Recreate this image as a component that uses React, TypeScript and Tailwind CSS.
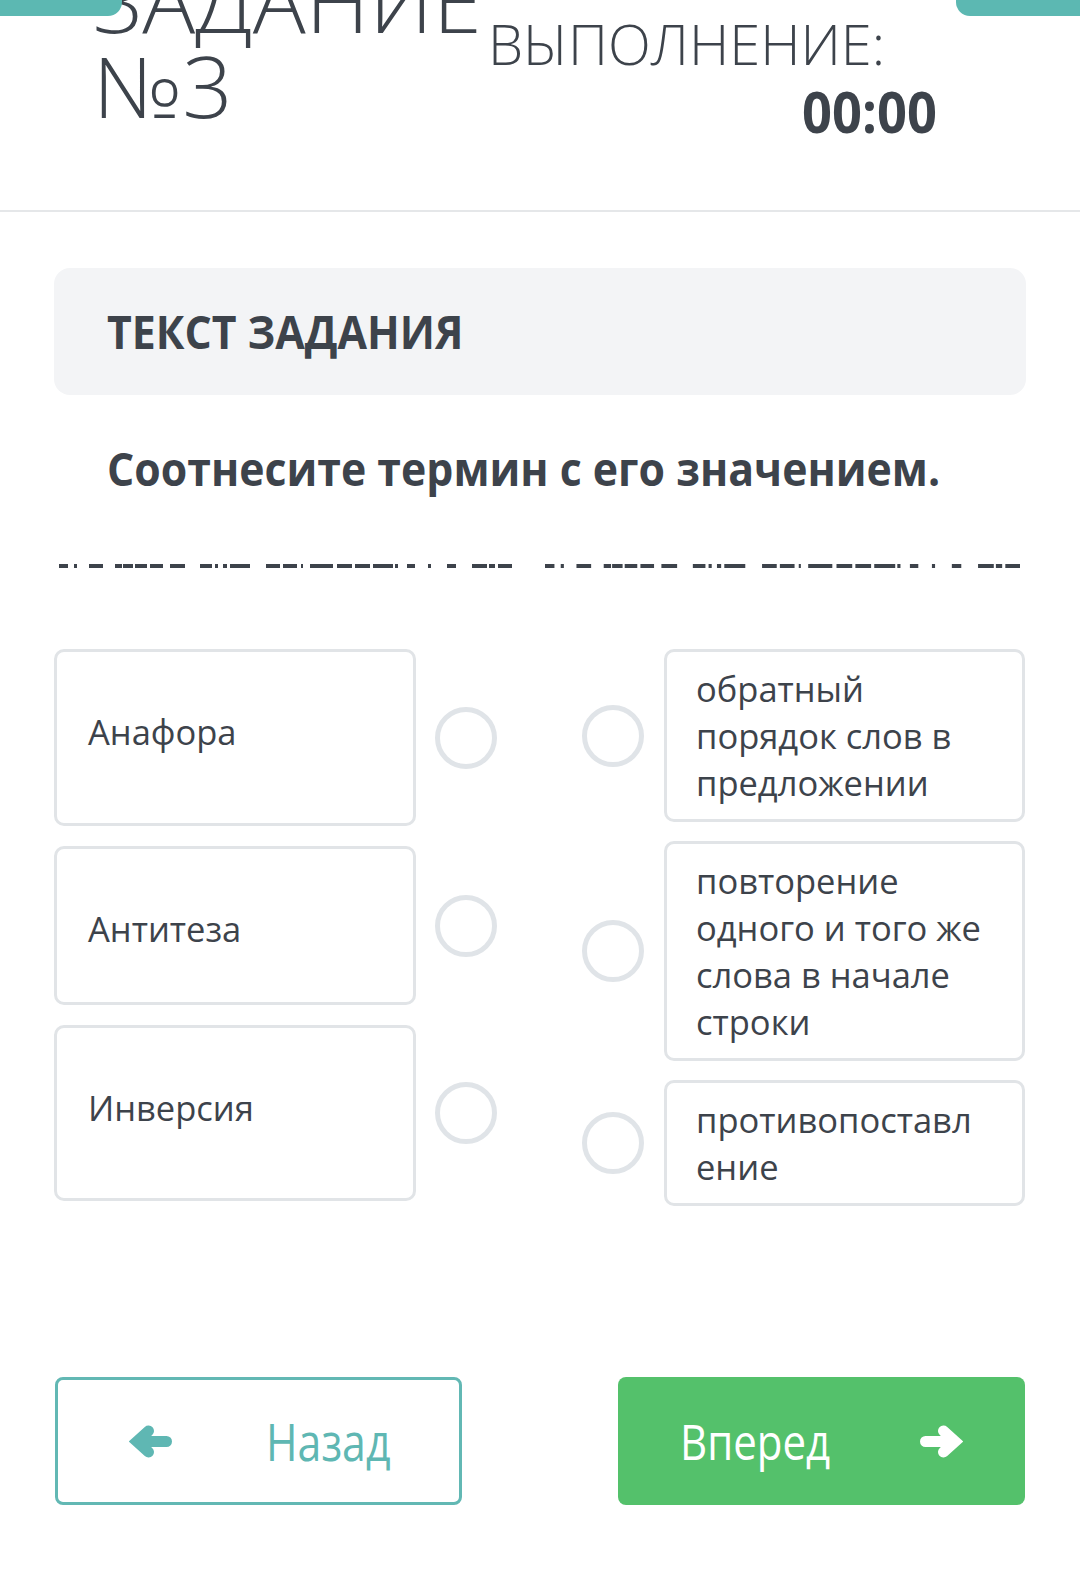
const dashes: [number, number][] = [
    [0, 9], [15, 3], [30, 14], [56, 7], [64, 10], [76, 12], [91, 13], [111, 15],
    [141, 12], [156, 3], [164, 4], [171, 20],
    [207, 14], [224, 14], [242, 2], [251, 23], [278, 15], [296, 15], [314, 20], [336, 3],
    [348, 8], [369, 3], [388, 9], [413, 15], [430, 6], [439, 14],
];

function DashRow({ width }: { width: number }) {
    return (
        <svg width={width} height={4} viewBox="0 0 453 4" preserveAspectRatio="none" className="block">
            {dashes.map(([x, w], i) => (
                <rect key={i} x={x} y={0} width={w} height={4} fill="#3d434b" />
            ))}
        </svg>
    );
}

// thick rounded arrow, points left by default
function Arrow({ right = false }: { right?: boolean }) {
    return (
        <svg width={43} height={33} viewBox="0 0 43 33" className={right ? 'shrink-0 -scale-x-100' : 'shrink-0'}>
            <path
                d="M19.5 6 L8 16.5 L19.5 27 M8 16.5 H37.5"
                fill="none"
                stroke="currentColor"
                strokeWidth={11}
                strokeLinecap="round"
                strokeLinejoin="miter"
            />
        </svg>
    );
}

function Ring() {
    return <div className="w-[62px] h-[62px] shrink-0 rounded-full border-[5px] border-[#e0e4e8]" />;
}

const terms = [
    { text: 'Анафора', h: 'h-[177px]' },
    { text: 'Антитеза', h: 'h-[159px]' },
    { text: 'Инверсия', h: 'h-[176px]' },
];

const meanings = [
    'обратный порядок слов в предложении',
    'повторение одного и того же слова в начале строки',
    'противопоставление',
];

export default function App() {
    return (
        <div className="min-h-[1576px] bg-white text-[#3d434b] font-['Open_Sans',sans-serif]">
            {/* Header */}
            <div className="relative h-[212px] overflow-hidden border-b-2 border-[#e5e7e9]">
                <div className="absolute left-0 top-0 w-[122px] h-[16px] bg-[#5cb8b2] rounded-br-[14px] z-10" />
                <div className="absolute right-0 top-0 w-[124px] h-[16px] bg-[#5cb8b2] rounded-bl-[14px] z-10" />
                <div className="flex">
                    <div className="w-[488px] shrink-0 pl-[93px] -mt-[42px]">
                        <div className="origin-left scale-x-[1.05] whitespace-nowrap text-[84px] leading-[85px] font-light">
                            <div>ЗАДАНИЕ</div>
                            <div>№3</div>
                        </div>
                    </div>
                    <div className="w-[449px] shrink-0 pt-[15px]">
                        <div className="whitespace-nowrap text-[56px] leading-[56px] font-light">
                            ВЫПОЛНЕНИЕ:
                        </div>
                        <div className="mt-[12px] text-right origin-right scale-x-[0.92] text-[57px] leading-[57px] font-bold">
                            00:00
                        </div>
                    </div>
                </div>
            </div>

            {/* Task text */}
            <div className="mx-[54px] mt-[56px] h-[127px] rounded-2xl bg-[#f3f4f6] flex items-center pl-[53px]">
                <span className="origin-left scale-x-[0.91] whitespace-nowrap text-[47px] font-bold">ТЕКСТ ЗАДАНИЯ</span>
            </div>
            <div className="pl-[107px] mt-[48px] h-[50px] flex items-center">
                <span className="origin-left scale-x-[0.93] whitespace-nowrap text-[46px] font-bold">
                    Соотнесите термин с его значением.
                </span>
            </div>

            <div className="flex mt-[71px] pl-[59px]">
                <DashRow width={453} />
                <div className="ml-[33px]">
                    <DashRow width={475} />
                </div>
            </div>

            {/* Matching */}
            <div className="flex mt-[81px] pl-[54px]">
                <div className="flex flex-col gap-[20px]">
                    {terms.map((t) => (
                        <div key={t.text} className="flex items-center">
                            <div className={`w-[362px] ${t.h} rounded-[10px] border-[3px] border-[#e1e4e7] px-[31px] pt-[56px] text-[34.5px] leading-[47px]`}>
                                {t.text}
                            </div>
                            <div className="ml-[19px]">
                                <Ring />
                            </div>
                        </div>
                    ))}
                </div>
                <div className="flex flex-col gap-[19px] ml-[85px]">
                    {meanings.map((m) => (
                        <div key={m} className="flex items-center">
                            <Ring />
                            <div className="ml-[20px] w-[361px] rounded-[10px] border-[3px] border-[#e1e4e7] pl-[29px] pr-[36px] py-[13px] text-[34.5px] leading-[47px] break-words">
                                {m}
                            </div>
                        </div>
                    ))}
                </div>
            </div>

            {/* Navigation */}
            <div className="flex justify-between mx-[55px] mt-[171px]">
                <button className="w-[407px] h-[128px] rounded-[8px] border-[3px] border-[#62b8b4] flex items-center pl-[71px] text-[#5fb7b3]">
                    <Arrow />
                    <span className="ml-[94px] origin-left scale-x-[0.84] whitespace-nowrap text-[51px]">Назад</span>
                </button>
                <button className="w-[407px] h-[128px] rounded-[8px] bg-[#54c16b] flex items-center justify-between pl-[62px] pr-[62px] text-white">
                    <span className="origin-left scale-x-[0.84] whitespace-nowrap text-[50px]">Вперед</span>
                    <Arrow right />
                </button>
            </div>
        </div>
    );
}
